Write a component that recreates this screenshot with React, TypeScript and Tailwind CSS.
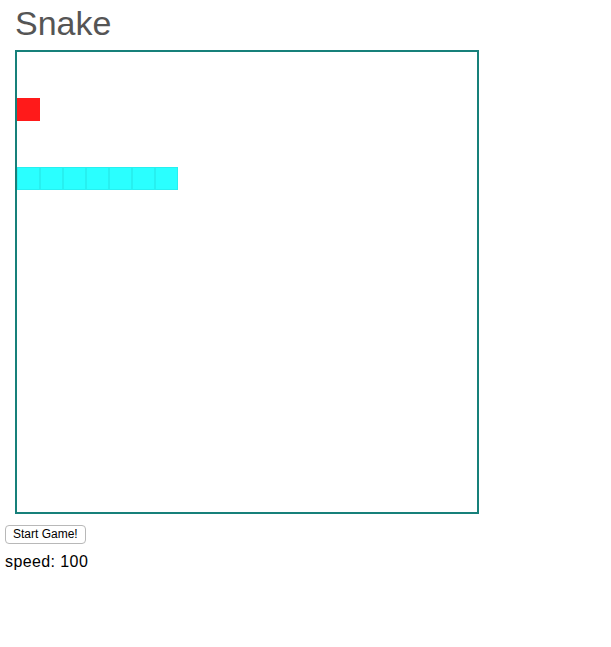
import React from 'react';

const CELL = 23;

const App = () => {
  const snake = [0, 1, 2, 3, 4, 5, 6].map((x) => ({ x, y: 5 }));
  const food = { x: 0, y: 2 };

  return (
    <div className="bg-white min-h-screen pl-[5px]" style={{ fontFamily: '"Liberation Sans", Arial, sans-serif' }}>
      <h1 className="pl-[10px] pt-[4px] text-[34px] leading-[39px] text-[#555555] font-normal">Snake</h1>
      <div className="ml-[10px] mt-[7px] w-[464px] h-[464px] border-2 border-[#17807a] relative">
        <div
          className="absolute bg-[#ff1a1a]"
          style={{ left: food.x * CELL, top: food.y * CELL, width: CELL, height: CELL }}
        />
        {snake.map((s, i) => (
          <div
            key={i}
            className="absolute bg-[#2affff] border border-[#27f0f0]"
            style={{ left: s.x * CELL, top: s.y * CELL, width: CELL, height: CELL }}
          />
        ))}
      </div>
      <button className="mt-[11px] h-[19px] px-[7px] text-[12px] leading-[17px] text-black bg-white border border-[#b8b8b8] rounded-[4px]">
        Start Game!
      </button>
      <div className="mt-[8px] text-[16px] leading-[18px] text-black tracking-[0.4px]">speed: 100</div>
    </div>
  );
};

export default App;
